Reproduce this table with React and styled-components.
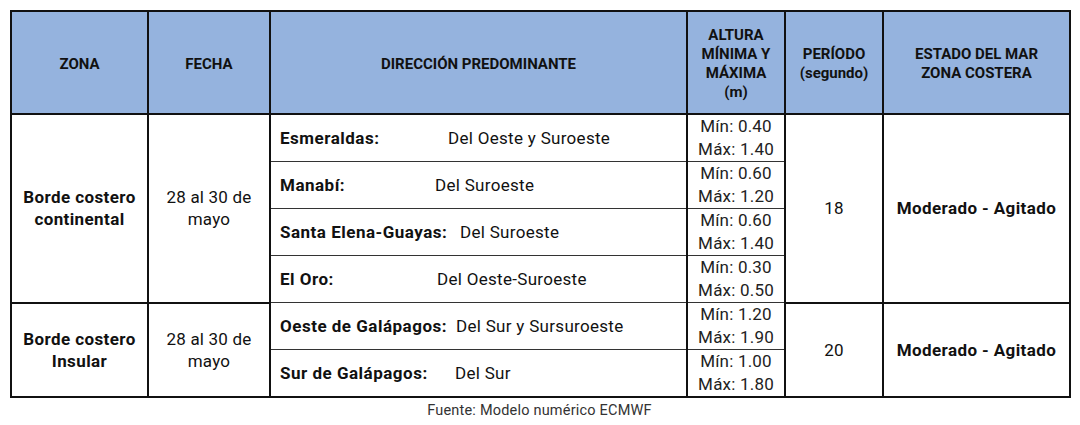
import styled, { createGlobalStyle } from "styled-components";

const GlobalStyle = createGlobalStyle`
  html, body {
    margin: 0;
    padding: 0;
    background: #ffffff;
  }
  body {
    font-family: Roboto, "Liberation Sans", Arial, sans-serif;
    color: #111;
  }
`;

const Page = styled.div`
  width: 1080px;
  height: 425px;
  padding: 10px 10px 0 10px;
  box-sizing: border-box;
`;

const Table = styled.table`
  width: 1059px;
  border-collapse: collapse;
  table-layout: fixed;
  border: 2px solid #111;
`;

const HeadCell = styled.th`
  background: #95b3de;
  border: 2px solid #111;
  height: 98px;
  padding: 3px 4px 0;
  font-size: 15px;
  font-weight: 700;
  line-height: 19px;
  text-align: center;
  vertical-align: middle;
  color: #111;
`;

const Cell = styled.td`
  border-left: 2px solid #111;
  border-right: 2px solid #111;
  border-top: ${(p) => (p.$major ? "2px solid #111" : "1px solid #333")};
  border-bottom: ${(p) => (p.$major ? "2px solid #111" : "1px solid #333")};
  text-align: center;
  vertical-align: middle;
  font-size: 17px;
  line-height: 22px;
  font-weight: ${(p) => (p.$bold ? 700 : 400)};
  letter-spacing: ${(p) => (p.$bold ? "0.4px" : "0.2px")};
  padding: 0 2px;
  height: ${(p) => p.$h || 45}px;
  box-sizing: border-box;
`;

const DirCell = styled(Cell)`
  text-align: left;
  padding-left: 9px;
  white-space: nowrap;
  letter-spacing: 0.3px;
`;

const Label = styled.span`
  display: inline-block;
  width: ${(p) => p.$w}px;
  font-weight: 700;
  letter-spacing: 0.5px;
`;

const Range = styled(Cell)`
  line-height: 23px;
  color: #222;
`;

const Footer = styled.div`
  width: 1059px;
  text-align: center;
  font-size: 14.5px;
  letter-spacing: 0.2px;
  color: #333;
  margin-top: 4px;
`;

const groups = [
  {
    zona: ["Borde costero", "continental"],
    periodo: "18",
    rows: [
      { label: "Esmeraldas:", w: 168, dir: "Del Oeste y Suroeste", min: "0.40", max: "1.40" },
      { label: "Manabí:", w: 155, dir: "Del Suroeste", min: "0.60", max: "1.20" },
      { label: "Santa Elena-Guayas:", w: 180, dir: "Del Suroeste", min: "0.60", max: "1.40" },
      { label: "El Oro:", w: 157, dir: "Del Oeste-Suroeste", min: "0.30", max: "0.50" },
    ],
  },
  {
    zona: ["Borde costero", "Insular"],
    periodo: "20",
    rows: [
      { label: "Oeste de Galápagos:", w: 176, dir: "Del Sur y Sursuroeste", min: "1.20", max: "1.90" },
      { label: "Sur de Galápagos:", w: 175, dir: "Del Sur", min: "1.00", max: "1.80", h: 46 },
    ],
  },
];

export default function App() {
  return (
    <>
      <GlobalStyle />
      <Page>
        <Table>
          <colgroup>
            <col style={{ width: 137 }} />
            <col style={{ width: 122 }} />
            <col style={{ width: 417 }} />
            <col style={{ width: 98 }} />
            <col style={{ width: 98 }} />
            <col style={{ width: 187 }} />
          </colgroup>
          <thead>
            <tr>
              <HeadCell>ZONA</HeadCell>
              <HeadCell>FECHA</HeadCell>
              <HeadCell>DIRECCIÓN PREDOMINANTE</HeadCell>
              <HeadCell>
                ALTURA
                <br />
                MÍNIMA Y
                <br />
                MÁXIMA
                <br />
                (m)
              </HeadCell>
              <HeadCell>
                PERÍODO
                <br />
                (segundo)
              </HeadCell>
              <HeadCell>
                ESTADO DEL MAR
                <br />
                ZONA COSTERA
              </HeadCell>
            </tr>
          </thead>
          <tbody>
            {groups.map((g) =>
              g.rows.map((r, i) => (
                <tr key={r.label}>
                  {i === 0 && (
                    <>
                      <Cell $major $bold rowSpan={g.rows.length}>
                        {g.zona[0]}
                        <br />
                        {g.zona[1]}
                      </Cell>
                      <Cell $major rowSpan={g.rows.length}>
                        28 al 30 de
                        <br />
                        mayo
                      </Cell>
                    </>
                  )}
                  <DirCell $h={r.h}>
                    <Label $w={r.w}>{r.label}</Label>
                    {r.dir}
                  </DirCell>
                  <Range $h={r.h}>
                    Mín: {r.min}
                    <br />
                    Máx: {r.max}
                  </Range>
                  {i === 0 && (
                    <>
                      <Cell $major rowSpan={g.rows.length}>
                        {g.periodo}
                      </Cell>
                      <Cell $major $bold rowSpan={g.rows.length}>
                        Moderado - Agitado
                      </Cell>
                    </>
                  )}
                </tr>
              ))
            )}
          </tbody>
        </Table>
        <Footer>Fuente: Modelo numérico ECMWF</Footer>
      </Page>
    </>
  );
}
